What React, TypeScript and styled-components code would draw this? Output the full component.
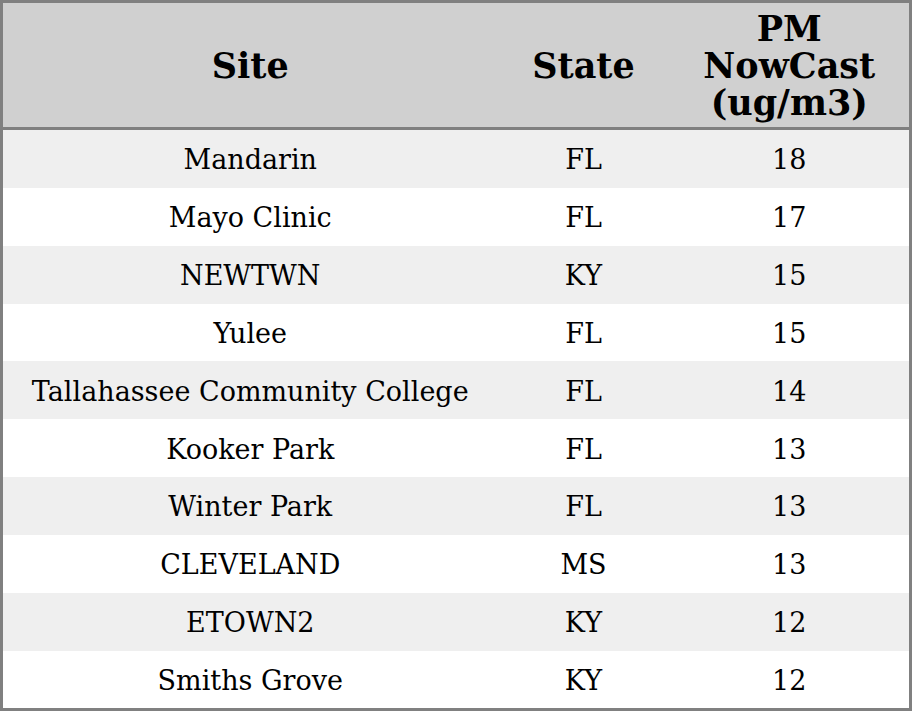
import * as React from 'react'
import styled, { createGlobalStyle } from 'styled-components'

const GlobalStyle = createGlobalStyle`
    html, body {
        margin: 0;
        padding: 0;
        background: #ffffff;
    }
`

const Table = styled.table`
    width: 912px;
    border-collapse: collapse;
    border: 3px solid #808080;
    font-family: "DejaVu Serif", serif;
    color: #000000;
    table-layout: fixed;
`

const HeadCell = styled.th`
    background: #d0d0d0;
    font-size: 35px;
    font-weight: bold;
    line-height: 37px;
    padding: 7px 4px 6px;
    text-align: center;
    border-bottom: 3px solid #808080;
`

const Row = styled.tr<{ $striped: boolean }>`
    background: ${(p) => (p.$striped ? '#efefef' : '#ffffff')};
`

const Cell = styled.td`
    font-size: 27px;
    line-height: 31px;
    height: 31px;
    padding: 14.3px 4px 12.55px;
    text-align: center;
    white-space: nowrap;
`

const rows = [
    { site: 'Mandarin', state: 'FL', pm: 18 },
    { site: 'Mayo Clinic', state: 'FL', pm: 17 },
    { site: 'NEWTWN', state: 'KY', pm: 15 },
    { site: 'Yulee', state: 'FL', pm: 15 },
    { site: 'Tallahassee Community College', state: 'FL', pm: 14 },
    { site: 'Kooker Park', state: 'FL', pm: 13 },
    { site: 'Winter Park', state: 'FL', pm: 13 },
    { site: 'CLEVELAND', state: 'MS', pm: 13 },
    { site: 'ETOWN2', state: 'KY', pm: 12 },
    { site: 'Smiths Grove', state: 'KY', pm: 12 },
]

export default function App() {
    return (
        <>
            <GlobalStyle />
            <Table>
                <colgroup>
                    <col style={{ width: 496 }} />
                    <col style={{ width: 172 }} />
                    <col style={{ width: 241 }} />
                </colgroup>
                <thead>
                    <tr>
                        <HeadCell>Site</HeadCell>
                        <HeadCell>State</HeadCell>
                        <HeadCell>PM<br />NowCast<br />(ug/m3)</HeadCell>
                    </tr>
                </thead>
                <tbody>
                    {rows.map((r, i) => (
                        <Row key={r.site} $striped={i % 2 === 0}>
                            <Cell>{r.site}</Cell>
                            <Cell>{r.state}</Cell>
                            <Cell>{r.pm}</Cell>
                        </Row>
                    ))}
                </tbody>
            </Table>
        </>
    )
}
